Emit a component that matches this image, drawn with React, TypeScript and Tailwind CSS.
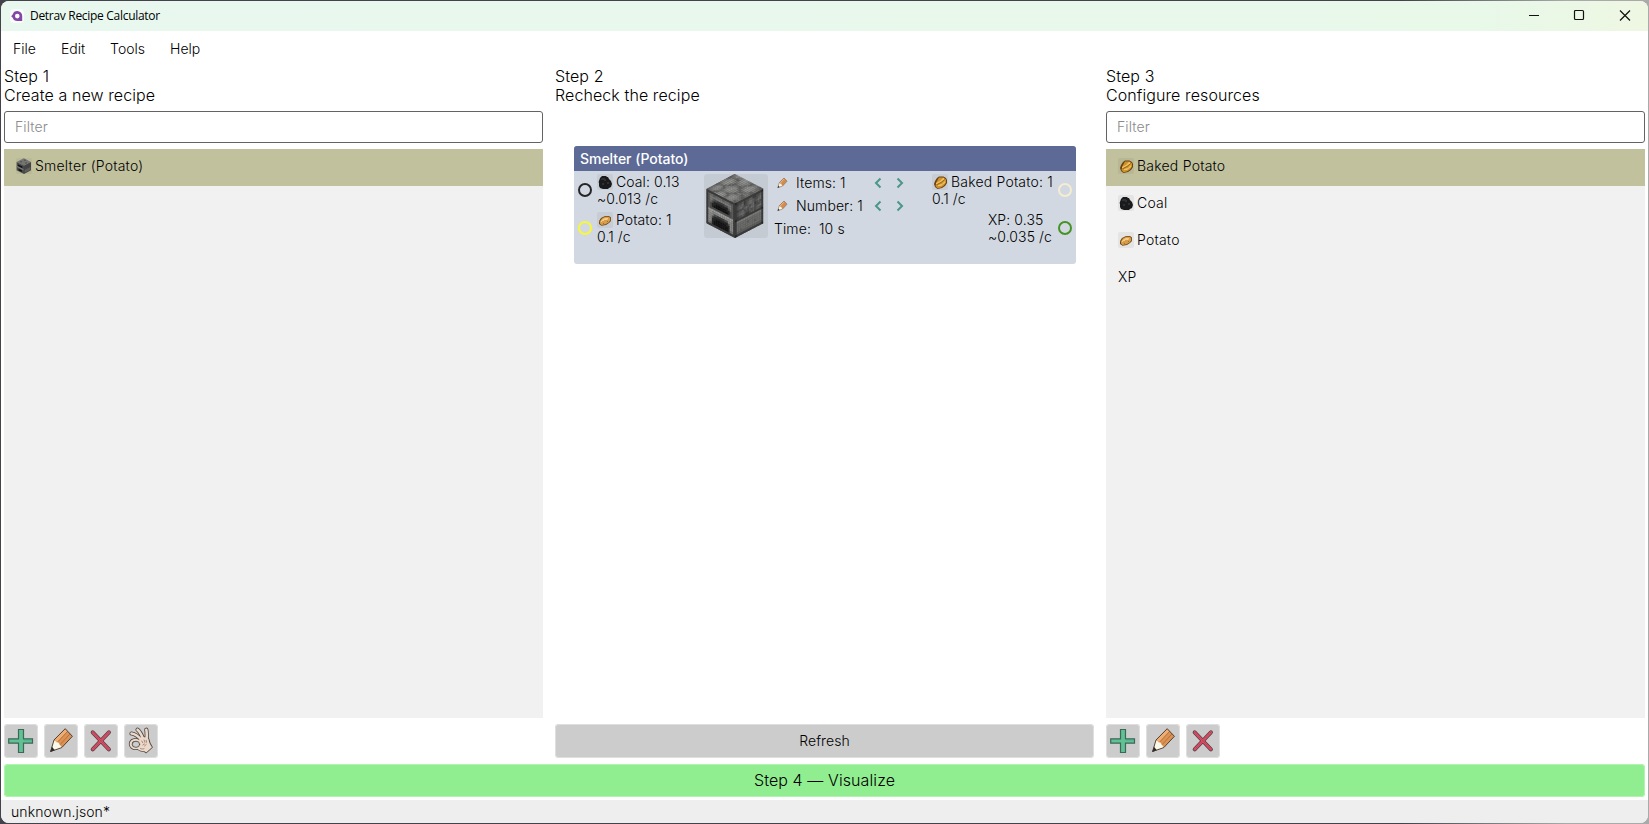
import React from "react";

const TOP = [
  "3444433455543345", "4566654566665456", "4677764677776467", "3466653466765346",
  "5344435534554355", "6654566653345666", "7765677765456777", "7764677775466776",
  "6653566664356665", "4434456643444554", "5566534435566433", "6777645346777654",
  "6777655446777765", "5666543545666654", "4355434554355443", "3444334443344433",
];
const FRONT = [
  "2222222222222222", "2455455554555442", "2466666666666642", "2465332222335642",
  "2453111111113542", "2431100000011342", "2431000000001342", "2433333333333342",
  "2888888888888882", "2787777777777872", "2777332222337772", "2773111111113772",
  "2771100000011772", "2771000000001772", "2651000000001562", "2222222222222222",
];
const SIDE = [
  "1222222222222221", "2233423344223342", "2344523455433452", "2345433455434552",
  "2233345434523432", "2344534345533342", "2345543343434552", "2233432234434432",
  "1222222222222221", "2666666666666662", "2555555555555552", "2555555455555552",
  "2555555555545552", "2554555555555552", "2444444444444442", "1222222222222221",
];
const SHADES = ["#111112", "#232324", "#3a3a3a", "#4c4c4c", "#5c5c5b", "#6b6b6a", "#7b7b79", "#898987", "#9b9b99"];
const TOP_SHADES = ["#111112", "#202021", "#3c3c3c", "#5f5f5e", "#6e6e6c", "#7c7c7a", "#888886", "#929290", "#9b9b99"];

function Face({ rows, matrix, shades = SHADES }: { rows: string[]; matrix: string; shades?: string[] }) {
  return (
    <g transform={matrix}>
      {rows.map((row, y) =>
        row.split("").map((c, x) => (
          <rect key={`${x}-${y}`} x={x} y={y} width="1.05" height="1.05" fill={shades[Number(c)]} />
        )),
      )}
    </g>
  );
}

function Furnace({ className }: { className: string }) {
  return (
    <svg viewBox="0 0 64 64" className={className}>
      <rect width="64" height="64" rx="3" fill="#000" fillOpacity=".06" />
      <path d="M30.5 0 59 15v34L31 64 2.5 49V15z" fill="#444" />
      <Face rows={TOP} shades={TOP_SHADES} matrix="matrix(1.78 -.93 1.78 .91 2.5 15)" />
      <Face rows={FRONT} matrix="matrix(1.78 .91 0 2.14 2.5 15)" />
      <Face rows={SIDE} matrix="matrix(1.76 -.9 0 2.14 31 29.5)" />
    </svg>
  );
}

function IconBox({ children }: { children: React.ReactNode }) {
  return (
    <svg viewBox="0 0 16 16" className="size-4 shrink-0">
      <rect width="16" height="16" rx="2" fill="#000" fillOpacity=".05" />
      {children}
    </svg>
  );
}

function Coal() {
  return (
    <IconBox>
      <path d="M5 2h4l1 1h1l1 2 2 2 1 3-1 3-2 1-1 1H6l-3-1-1-2V9L1.6 8 3 4z" fill="#191a1c" />
      <path d="M5 4h3v1h1v2H7V6H4V5zM10 8h2v2h-2zM5 9h2v2H5z" fill="#303033" />
    </IconBox>
  );
}

function Potato({ baked }: { baked?: boolean }) {
  return baked ? (
    <IconBox>
      <path d="M7 2.500h4.500l2.500 1.500 1 2v3l-2 3-3 2-4.500 1-2.500-2-1-3 1-3 2-3z" fill="#6b430e" />
      <path d="M7 3.500h4.500l2.500 2v3l-2 3-3 2-3.500.8-2-2.300 1-4z" fill="#cf9230" />
      <path d="M11 4h1v2l-3 2-4 2H4V9l4-2zM13 7v2l-4 3H6v-1l4-1z" fill="#efc45c" />
      <path d="M12.500 5.700 9 8.500 4.600 10.800" stroke="#8a5716" strokeWidth=".8" fill="none" />
    </IconBox>
  ) : (
    <IconBox>
      <path d="M8 4h4l2 1.500v3.500l-2 2-3 2-4.500.8L2 12V9l2-3z" fill="#714816" />
      <path d="M8 4.800h3.700l1.500 1.200v2.500L11.500 10.500l-3 1.700-4 .8-1.500-1.500V9.200L5 6.500z" fill="#d89d4b" />
      <path d="M8 6h3v1l-1 1H7v1H5v1H4V9l2-2z" fill="#f3cd88" />
      <path d="M10 9h1v1h-1zM6 11h1v1H6z" fill="#a86f29" />
    </IconBox>
  );
}

function Smelter() {
  return (
    <svg viewBox="0 0 16 16" className="size-4 shrink-0">
      <rect width="16" height="16" rx="2" fill="#000" fillOpacity=".04" />
      <path d="M7.8.2 15 4 7.8 7.6.6 4z" fill="#747473" />
      <path d="M.6 4 8 7.5V16L.6 12.2z" fill="#494949" />
      <path d="M15 4 8 7.5V16l7-3.8z" fill="#444" />
      <path d="M2 6.4 6.3 8.5v1.8L2 8zM2.6 10.7l3.2 1.6V14l-3.2-1.6z" fill="#111" />
      <path d="M1 8.5l6.5 3.2" stroke="#8a8a88" strokeWidth=".9" />
      <path d="M8.6 12 14.4 9v2.7l-5.8 3z" fill="#5e5e5d" />
      <path d="M4 3.8h2M8 2.2h2M9 5h2" stroke="#474747" strokeWidth=".8" />
    </svg>
  );
}

function Plus() {
  return (
    <svg viewBox="0 0 33 33" className="size-[33px]">
      <path d="M14.500 5.500h5v9.300h9v4.400h-9v9.300h-5v-9.300h-9.800v-4.400h9.800z" fill="#5fc194" stroke="#3f6657" strokeWidth="1.200" />
      <path d="M20 15.800h7.500" stroke="#439c79" strokeWidth="1" />
    </svg>
  );
}

function Pencil({ className }: { className: string }) {
  return (
    <svg viewBox="0 0 33 33" className={className}>
      <path d="m21.200 4.700 7.200 7.600-10.600 11.300-11.200 3.900 3.400-11.500z" fill="#dc9252" />
      <path d="m9.800 16 4.500 2.400 3.600 5.100-11 4.200z" fill="#fbf8e7" />
      <path d="M6.200 28 7.900 22.700l3 3.500z" fill="#23262e" />
      <path d="m21.200 4.700 2.300 2.500-10.700 11-3-2.200z" fill="#edad74" />
      <path d="m23.600 7.400-10.300 11M26 9.900 16 20.700" stroke="#ad6a35" strokeWidth=".8" fill="none" />
      <path d="m21.200 4.700 7.200 7.600-10.600 11.300-11.200 3.900 3.400-11.500z" fill="none" stroke="#3f342d" strokeWidth=".9" />
    </svg>
  );
}

function Cross() {
  return (
    <svg viewBox="0 0 33 33" className="size-[33px]" fill="none" strokeLinecap="round">
      <path d="m8.700 8.300 16.200 17M24.900 8.300l-16.200 17" stroke="#563d48" strokeWidth="4" />
      <path d="m8.700 8.300 16.200 17M24.900 8.300l-16.200 17" stroke="#e44f65" strokeWidth="2.400" />
      <path d="m8.700 8.300 16.200 17M24.900 8.300l-16.200 17" stroke="#a63d52" strokeWidth=".8" strokeDasharray="1 1.300" />
    </svg>
  );
}

function OkHand() {
  const fingers = "M7.500 9.500c4 .5 7 3 10 6.500M13.500 5.700c2.500 2 4 5 5.500 9M22.300 5.700c.7 3 .5 6 .3 10";
  const palm = "M15.500 14.500c3-2 7-1.500 9 .5.500 3 1 5 3.500 8.200l-5.800 5.300-1.700-1.200c-3.500.2-5.500-1.300-7-2.300l1.500-5z";
  return (
    <svg viewBox="0 0 33 33" className="size-[33px]" fill="none" strokeLinecap="round" strokeLinejoin="round">
      <ellipse cx="11.500" cy="20" rx="4.800" ry="4.200" stroke="#4c4743" strokeWidth="3.800" />
      <path d={fingers} stroke="#4c4743" strokeWidth="4.200" />
      <path d={palm} fill="#edd9ca" stroke="#4c4743" strokeWidth="1.600" />
      <path d={fingers} stroke="#edd9ca" strokeWidth="2.600" />
      <ellipse cx="11.500" cy="20" rx="4.800" ry="4.200" stroke="#edd9ca" strokeWidth="2.200" />
      <path d={palm} fill="#edd9ca" />
      <ellipse cx="12" cy="20.300" rx="3.700" ry="3.100" fill="#ccc" stroke="#4c4743" strokeWidth=".8" />
      <path d="M16.500 24.500c1.200.7 2.500.7 3.500.2M17.800 17l1 1.800m1.300-2.800.8 2.300m1.200-2 .5 2M18.900 21l1.600-1M20.500 22l1.800-1.600" stroke="#8f7465" strokeWidth=".8" />
    </svg>
  );
}

function ToolButton({ children }: { children: React.ReactNode }) {
  return (
    <button className="flex size-[34px] items-start rounded-[4px] bg-[#ccc] shadow-[inset_0_0_0_1px_#dfdfdf]">{children}</button>
  );
}

function Heading({ step, text }: { step: string; text: string }) {
  return (
    <div className="h-[44px] shrink-0 text-base leading-[19px]">
      <div>{step}</div>
      <div>{text}</div>
    </div>
  );
}

function ListPanel({ step, text, items, tools }: { step: string; text: string; items: { icon?: React.ReactNode; label: string }[]; tools: React.ReactNode[] }) {
  return (
    <section className="flex min-h-0 flex-col">
      <Heading step={step} text={text} />
      <div className="mb-1.5 flex h-8 shrink-0 items-center rounded-[3px] border border-[#636363] px-2.5 text-sm text-[#8a8a8a]">
        Filter
      </div>
      <div className="min-h-0 flex-1 bg-[#f1f1f1]">
        {items.map((it, i) => (
          <div
            key={it.label}
            className={`flex h-[37px] items-center gap-[3px] px-3 pb-[3px] text-sm leading-[18px] ${i === 0 ? "bg-[#c1c19e]" : ""}`}
          >
            {it.icon}
            <span className="pb-px tracking-[0.016em]">{it.label}</span>
          </div>
        ))}
      </div>
      <div className="mt-1.5 flex gap-1.5">
        {tools.map((t, i) => (
          <ToolButton key={i}>{t}</ToolButton>
        ))}
      </div>
    </section>
  );
}

function Port({ className }: { className: string }) {
  return <span className={`mt-3 size-3.5 shrink-0 rounded-full border-2 ${className}`} />;
}

function Arrow({ right }: { right?: boolean }) {
  return (
    <svg viewBox="0 0 8 12" className="h-3 w-2" fill="none">
      <path d={right ? "M1.500 1.500 6 6 1.500 10.500" : "M6.500 1.500 2 6 6.500 10.500"} stroke="#4a9787" strokeWidth="2" />
    </svg>
  );
}

function Stepper({ label }: { label: string }) {
  return (
    <div className="flex h-[23px] items-center">
      <Pencil className="ml-px size-3.5" />
      <span className="ml-[7px] w-[78px] whitespace-nowrap">{label}</span>
      <Arrow />
      <span className="w-3.5" />
      <Arrow right />
    </div>
  );
}

function RecipeNode() {
  return (
    <div className="mt-[35px] ml-[19px] h-[118px] w-[502px] overflow-hidden rounded-[3px] bg-[#d2d8e1] text-sm leading-[17px]">
      <div className="h-[25px] bg-[#5d6a96] px-1.5 leading-[26px] font-medium tracking-[-0.002em] text-white">Smelter (Potato)</div>
      <div className="flex">
        <div className="w-[130px] pl-1">
          <div className="flex h-[38px] gap-[5px]">
            <Port className="border-[#262626]" />
            <div className="pt-0.5">
              <div className="flex items-center gap-[3px]"><Coal />Coal: 0.13</div>
              <div>~0.013 /c</div>
            </div>
          </div>
          <div className="flex h-[38px] gap-[5px]">
            <Port className="border-[#f7f73b]" />
            <div className="pt-0.5">
              <div className="flex items-center gap-[3px]"><Potato />Potato: 1</div>
              <div>0.1 /c</div>
            </div>
          </div>
        </div>
        <Furnace className="mt-[3px] size-16 shrink-0" />
        <div className="ml-1.5 w-[135px]">
          <Stepper label="Items: 1" />
          <Stepper label="Number: 1" />
          <div className="flex h-[23px] items-center whitespace-pre">Time:  10 s</div>
        </div>
        <div className="flex flex-1 flex-col items-end pr-1">
          <div className="flex h-[38px] gap-[5px]">
            <div className="pt-0.5">
              <div className="flex items-center gap-[3px] tracking-[0.014em] whitespace-nowrap"><Potato baked />Baked Potato: 1</div>
              <div>0.1 /c</div>
            </div>
            <Port className="border-[#f5ecd2]" />
          </div>
          <div className="flex h-[38px] gap-1.5">
            <div className="pt-0.5">
              <div>XP: 0.35</div>
              <div>~0.035 /c</div>
            </div>
            <Port className="border-[#459324]" />
          </div>
        </div>
      </div>
    </div>
  );
}

export default function App() {
  return (
    <div className="h-[824px] w-[1649px] overflow-hidden bg-[linear-gradient(90deg,#44424c_0%,#44424c_85%,#aaa_95%)] p-px font-['Inter',sans-serif] font-light tracking-[0.006em] text-black">
      <div className="flex h-[822px] flex-col overflow-hidden rounded-lg bg-white">
        <header className="flex h-[30px] shrink-0 items-center bg-[linear-gradient(90deg,#e8f8ef_0%,#e8f8e9_90%,#eef7e2_100%)] text-black">
          <svg viewBox="0 0 14 14" className="ml-[9px] size-3.5">
            <rect width="14" height="14" rx="4" fill="#fff" fillOpacity=".7" />
            <path d="M7.300 2a5 5 0 0 1 4.900 5v5H7.300a4.900 4.900 0 0 1-4.600-3.300L1.200 7.300l1.500-1.900A4.900 4.900 0 0 1 7.300 2z" fill="#8446a7" />
            <circle cx="7.300" cy="7.100" r="2.300" fill="#fff" />
          </svg>
          <span className="ml-1.5 font-['Open_Sans',sans-serif] text-xs font-normal tracking-[-0.3px]">Detrav Recipe Calculator</span>
          <svg viewBox="0 0 110 12" className="mr-[17px] mb-0.5 ml-auto h-3 w-[110px]" fill="none" stroke="#111" strokeWidth="1.200">
            <path d="M8 6.500h10" />
            <rect x="53.500" y="1.500" width="9" height="9" rx="1" />
            <path d="m99 1.500 10 10M109 1.500l-10 10" strokeWidth="1.200" />
          </svg>
        </header>
        <nav className="flex h-[36px] shrink-0 items-center gap-[25px] pb-px pl-3 text-sm tracking-normal">
          <span>File</span>
          <span>Edit</span>
          <span>Tools</span>
          <span>Help</span>
        </nav>
        <main className="ml-[3px] grid h-[691px] w-[1641px] shrink-0 grid-cols-3 gap-x-3">
          <ListPanel
            step="Step 1"
            text="Create a new recipe"
            items={[{ icon: <Smelter />, label: "Smelter (Potato)" }]}
            tools={[<Plus />, <Pencil className="size-[33px]" />, <Cross />, <OkHand />]}
          />
          <section className="flex min-h-0 flex-col">
            <Heading step="Step 2" text="Recheck the recipe" />
            <div className="flex-1">
              <RecipeNode />
            </div>
            <button className="h-[34px] rounded-[4px] bg-[#ccc] text-sm shadow-[inset_0_0_0_1px_#dfdfdf]">Refresh</button>
          </section>
          <ListPanel
            step="Step 3"
            text="Configure resources"
            items={[
              { icon: <Potato baked />, label: "Baked Potato" },
              { icon: <Coal />, label: "Coal" },
              { icon: <Potato />, label: "Potato" },
              { label: "XP" },
            ]}
            tools={[<Plus />, <Pencil className="size-[33px]" />, <Cross />]}
          />
        </main>
        <button className="mt-1.5 ml-[3px] h-[33px] w-[1641px] shrink-0 rounded-[4px] bg-[#90ee90] pb-0.5 text-base shadow-[inset_0_0_0_1px_#b1f3b1]">
          Step 4 — Visualize
        </button>
        <footer className="mt-[3px] flex flex-1 items-center bg-[#eee] pl-2.5 text-sm">unknown.json*</footer>
      </div>
    </div>
  );
}
